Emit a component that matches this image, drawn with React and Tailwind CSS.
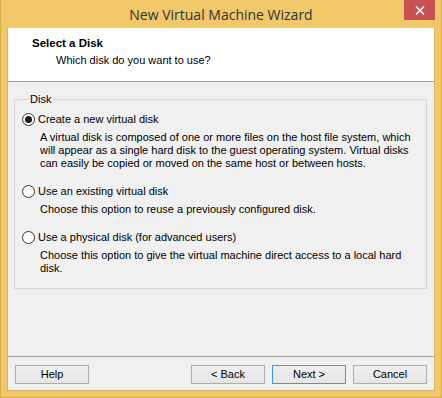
import React, { useState } from 'react';

const options = [
  {
    id: 'new',
    label: 'Create a new virtual disk',
    desc: [
      'A virtual disk is composed of one or more files on the host file system, which',
      'will appear as a single hard disk to the guest operating system. Virtual disks',
      'can easily be copied or moved on the same host or between hosts.',
    ],
  },
  {
    id: 'existing',
    label: 'Use an existing virtual disk',
    desc: ['Choose this option to reuse a previously configured disk.'],
  },
  {
    id: 'physical',
    label: 'Use a physical disk (for advanced users)',
    desc: [
      'Choose this option to give the virtual machine direct access to a local hard',
      'disk.',
    ],
  },
];

const Radio = ({ checked }) => (
  <span className="w-[13px] h-[13px] rounded-full border border-[#333333] bg-white flex items-center justify-center flex-shrink-0">
    {checked && <span className="w-[7px] h-[7px] rounded-full bg-[#1c1c1c]"></span>}
  </span>
);

const Button = ({ children, primary }) => (
  <button
    className={
      primary
        ? 'w-[74px] h-[19px] border border-[#3399ff] bg-gradient-to-b from-[#f0f0f0] to-[#e5e5e5] text-[11px] leading-[13px] text-black'
        : 'w-[74px] h-[19px] border border-[#adadad] bg-gradient-to-b from-[#f0f0f0] to-[#e5e5e5] text-[11px] leading-[13px] text-black'
    }
  >
    {children}
  </button>
);

export default function App() {
  const [selected, setSelected] = useState('new');

  return (
    <div className="w-[442px] h-[398px] bg-[#f0c86a] border-x border-b border-[#d8aa4c] flex flex-col font-['Liberation_Sans',Arial,sans-serif] overflow-hidden">
      {/* Title bar */}
      <div className="h-[28px] grid grid-cols-[1fr_auto_1fr] flex-shrink-0">
        <div></div>
        <div className="font-['Open_Sans',sans-serif] text-[14px] leading-[28px] text-[#333333] pt-[1px]">
          New Virtual Machine Wizard
        </div>
        <div className="flex justify-end items-start pr-[6px]">
          <div className="w-[31px] h-[20px] bg-[#c75050] flex items-center justify-center">
            <svg width="10" height="9" viewBox="0 0 10 9">
              <path d="M1 0.5 L9 8.5 M9 0.5 L1 8.5" stroke="#ffffff" strokeWidth="1.6" />
            </svg>
          </div>
        </div>
      </div>

      {/* Client area */}
      <div className="mx-[6px] mb-[6px] flex-1 bg-[#f0f0f0] border border-t-0 border-[#dcb45c] flex flex-col text-[11px] leading-[13px] text-black">
        {/* Header */}
        <div className="h-[54px] bg-white border-b border-[#a0a0a0] flex-shrink-0 pt-[9px]">
          <div className="pl-[24px] font-bold text-[11.5px]">Select a Disk</div>
          <div className="pl-[48px] mt-[4px]">Which disk do you want to use?</div>
        </div>

        {/* Group box */}
        <fieldset className="mt-[11px] ml-[6px] mr-[7px] border border-[#d5d5d5] px-[7px] pt-[7px] pb-[13px]">
          <legend className="ml-[6px] px-[2px] leading-[13px]">Disk</legend>
          {options.map((opt, i) => (
            <div key={opt.id} className={i === 0 ? '' : 'mt-[15px]'}>
              <label className="flex items-center gap-[3px] h-[13px]" onClick={() => setSelected(opt.id)}>
                <Radio checked={selected === opt.id} />
                <span>{opt.label}</span>
              </label>
              <div className="mt-[5px] pl-[18px]">
                {opt.desc.map((line) => (
                  <div key={line} className="whitespace-nowrap">{line}</div>
                ))}
              </div>
            </div>
          ))}
        </fieldset>

        <div className="flex-1"></div>

        {/* Footer */}
        <div className="border-t border-[#a0a0a0] pt-[8px] pb-[6px] pl-[7px] pr-[7px] flex items-center flex-shrink-0">
          <Button>Help</Button>
          <div className="flex-1"></div>
          <div className="flex gap-[7px]">
            <Button>&lt; Back</Button>
            <Button primary>Next &gt;</Button>
            <Button>Cancel</Button>
          </div>
        </div>
      </div>
    </div>
  );
}
